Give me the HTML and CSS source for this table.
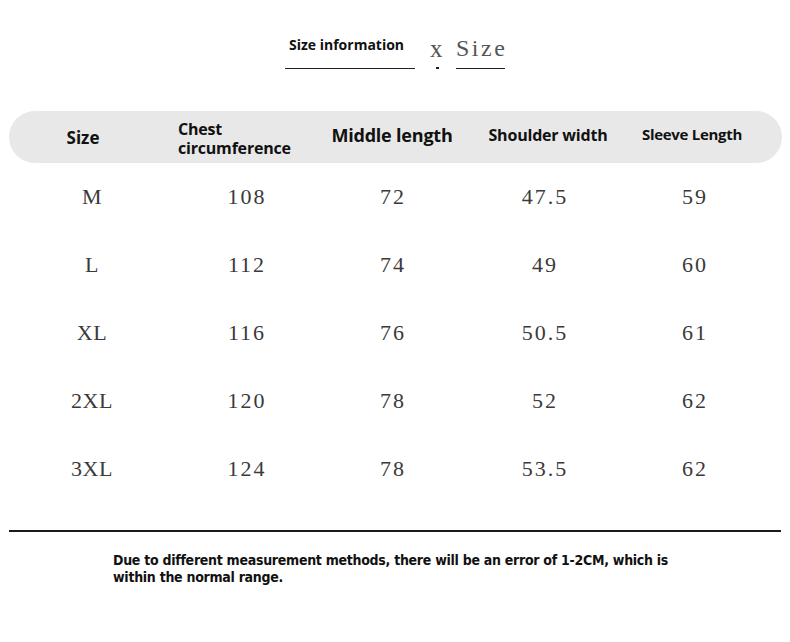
FILE: index.html
```html
<!DOCTYPE html>
<html lang="en">
<head>
<meta charset="utf-8">
<title>Size information</title>
<link rel="stylesheet" href="styles.css">
</head>
<body>
<div class="page">
  <div class="title">
    <div class="title-main">Size information</div>
    <div class="title-x">x</div>
    <div class="title-size">Size</div>
  </div>

  <div class="table">
    <div class="head">
      <div class="hcell h-size">Size</div>
      <div class="hcell h-chest"><div class="l1">Chest</div><div class="l2">circumference</div></div>
      <div class="hcell h-middle">Middle length</div>
      <div class="hcell h-shoulder">Shoulder width</div>
      <div class="hcell h-sleeve">Sleeve Length</div>
    </div>
    <div class="row"><div class="cell">M</div><div class="cell">108</div><div class="cell">72</div><div class="cell">47.5</div><div class="cell">59</div></div>
    <div class="row"><div class="cell">L</div><div class="cell">112</div><div class="cell">74</div><div class="cell">49</div><div class="cell">60</div></div>
    <div class="row"><div class="cell">XL</div><div class="cell">116</div><div class="cell">76</div><div class="cell">50.5</div><div class="cell">61</div></div>
    <div class="row"><div class="cell">2XL</div><div class="cell">120</div><div class="cell">78</div><div class="cell">52</div><div class="cell">62</div></div>
    <div class="row"><div class="cell">3XL</div><div class="cell">124</div><div class="cell">78</div><div class="cell">53.5</div><div class="cell">62</div></div>
  </div>

  <div class="rule"></div>

  <p class="note">Due to different measurement methods, there will be an error of 1-2CM, which is within the normal range.</p>
</div>
</body>
</html>
```
FILE: styles.css
```css
html, body {
  margin: 0;
  padding: 0;
  background: #ffffff;
}

.page {
  width: 790px;
  height: 642px;
  position: relative;
  overflow: hidden;
}

/* ---------- title ---------- */
.title {
  display: flex;
  justify-content: center;
  align-items: flex-end;
  padding-top: 31px;
  height: 38px;
}

.title-main {
  width: 130px;
  height: 38px;
  box-sizing: border-box;
  border-bottom: 1px solid #222;
  font-family: "Open Sans", sans-serif;
  font-weight: 700;
  font-size: 14px;
  letter-spacing: 0;
  line-height: 27px;
  color: #111;
  padding-left: 4px;
  white-space: nowrap;
}

.title-x {
  position: relative;
  margin-left: 15px;
  width: 26px;
  height: 38px;
  font-family: "Liberation Serif", serif;
  font-size: 25px;
  line-height: 36px;
  color: #555;
}

.title-x::after {
  content: "";
  position: absolute;
  left: 6px;
  bottom: 0;
  width: 3px;
  height: 2px;
  background: #222;
}

.title-size {
  width: 49px;
  height: 38px;
  box-sizing: border-box;
  border-bottom: 1px solid #222;
  font-family: "Liberation Serif", serif;
  font-size: 24px;
  letter-spacing: 2.5px;
  line-height: 35px;
  color: #555;
  white-space: nowrap;
}

/* ---------- table ---------- */
.table {
  margin-top: 42px;
}

.head,
.row {
  display: grid;
  grid-template-columns: 150px 160px 132px 172px 128px;
}

.head {
  margin: 0 8px 0 9px;
  height: 52px;
  border-radius: 26px;
  background: #e8e8e8;
  padding-left: 7px;
  align-items: center;
  font-family: "Open Sans", sans-serif;
  font-weight: 700;
  color: #111;
}

.hcell {
  text-align: center;
  white-space: nowrap;
}

.h-size {
  font-size: 17px;
  padding-right: 16px;
}

.h-chest {
  text-align: left;
  padding-left: 12px;
  padding-top: 6px;
  font-size: 16px;
  letter-spacing: -0.2px;
  display: flex;
  flex-direction: column;
}

.h-chest .l1,
.h-chest .l2 {
  height: 19px;
  line-height: 17px;
}

.h-middle {
  font-size: 18px;
  letter-spacing: -0.2px;
  padding-bottom: 5px;
}

.h-shoulder {
  font-size: 16px;
  letter-spacing: -0.2px;
  padding-left: 8px;
  padding-bottom: 5px;
}

.h-sleeve {
  font-size: 15px;
  letter-spacing: -0.3px;
  padding-right: 4px;
  padding-bottom: 6px;
}

.row {
  padding-left: 16px;
  height: 68px;
  align-items: center;
}

.cell {
  text-align: center;
  font-family: "Liberation Serif", serif;
  font-size: 22px;
  letter-spacing: 2px;
  padding-left: 2px;
  color: #3a3a3a;
}

.row .cell:first-child {
  letter-spacing: 0.5px;
}

/* ---------- footer ---------- */
.rule {
  margin: 27px 9px 0 9px;
  height: 2px;
  background: #1a1a1a;
}

.note {
  margin: 20px 0 0 113px;
  width: 570px;
  font-family: "DejaVu Sans Condensed", "Open Sans", sans-serif;
  font-stretch: condensed;
  font-weight: 700;
  font-size: 14px;
  letter-spacing: -0.28px;
  line-height: 17px;
  color: #111;
}
```
